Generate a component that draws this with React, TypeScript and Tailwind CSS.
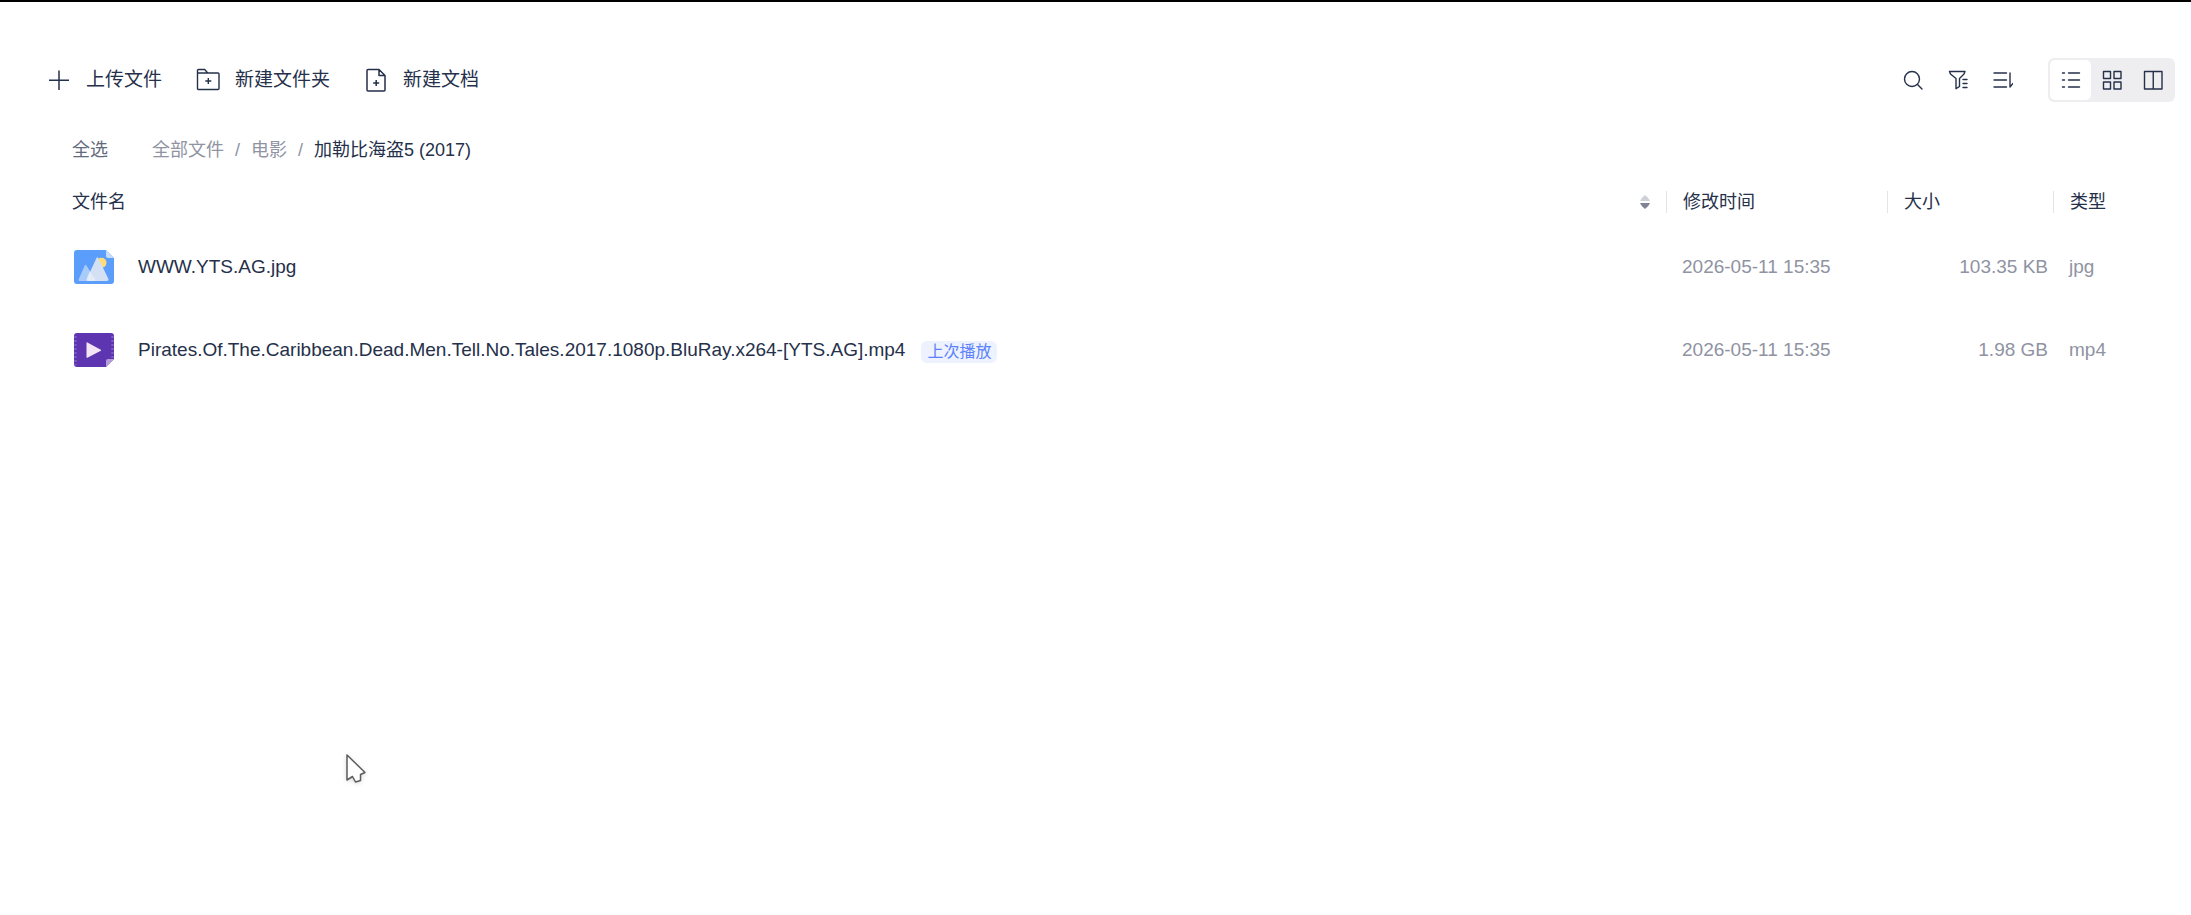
import type { ReactNode } from 'react'

const actions = [
  {
    label: '上传文件',
    icon: (
      <svg viewBox="0 0 24 24" className="h-6 w-6" fill="none" stroke="currentColor" strokeWidth="1.5" aria-hidden="true">
        <path d="M12 2.5v19.5M2 12.25h20" />
      </svg>
    ),
  },
  {
    label: '新建文件夹',
    icon: (
      <svg viewBox="0 0 24 24" className="h-6 w-6" fill="none" stroke="currentColor" strokeWidth="1.4" strokeLinejoin="round" aria-hidden="true">
        <path d="M1.5 5.2V2.500q0-1 1-1h6.200l3 3.500H22q1 0 1 1v14.500q0 1-1 1H2.500q-1 0-1-1zM1.500 5H11.700M12.300 10v6M9.300 13h6" />
      </svg>
    ),
  },
  {
    label: '新建文档',
    icon: (
      <svg viewBox="0 0 24 24" className="h-6 w-6" fill="none" stroke="currentColor" strokeWidth="1.5" strokeLinejoin="round" aria-hidden="true">
        <path d="M15 1.500H4q-1 0-1 1V22q0 1 1 1H20q1 0 1-1V7.500zV7.500h6M12.200 12v6M9.200 15h6" />
      </svg>
    ),
  },
]

const crumbs = ['全部文件', '电影']

const files = [
  { name: 'WWW.YTS.AG.jpg', time: '2026-05-11 15:35', size: '103.35 KB', type: 'jpg', lastPlayed: false },
  {
    name: 'Pirates.Of.The.Caribbean.Dead.Men.Tell.No.Tales.2017.1080p.BluRay.x264-[YTS.AG].mp4',
    time: '2026-05-11 15:35',
    size: '1.98 GB',
    type: 'mp4',
    lastPlayed: true,
  },
]

function LineIcon({ children }: { children: ReactNode }) {
  return (
    <svg viewBox="0 0 20 20" className="h-5 w-5" fill="none" stroke="currentColor" strokeWidth="1.4" strokeLinecap="round" strokeLinejoin="round" aria-hidden="true">
      {children}
    </svg>
  )
}

function ImageFileIcon() {
  return (
    <svg viewBox="0 0 40 34" className="h-[34px] w-10 flex-shrink-0" aria-hidden="true">
      <path d="M3 0H32L40 8V31a3 3 0 0 1-3 3H3a3 3 0 0 1-3-3V3a3 3 0 0 1 3-3z" fill="#5b9dfb" />
      <path d="M32 0L40 8H34a2 2 0 0 1-2-2z" fill="#c6dcfd" />
      <circle cx="27.500" cy="12.800" r="5" fill="#fddc79" />
      <path d="M10.800 15.500q.8-1.500 1.600 0L21 29q1 2-1 2H6q-2 0-1.200-2z" fill="#a9cbfa" />
      <path d="M22.500 8q.9-1.600 1.800 0L34.200 28.500q1 2.500-1.500 2.500H14.500q-2.500 0-1.500-2.500z" fill="#d4e1f5" />
      <path d="M15.800 21.500L21 29q1 2-1 2H14.500q-2.500 0-1.500-2.500z" fill="#e4ecf8" />
    </svg>
  )
}

function VideoFileIcon() {
  return (
    <svg viewBox="0 0 40 34" className="h-[34px] w-10 flex-shrink-0" aria-hidden="true">
      <path d="M3 0H37a3 3 0 0 1 3 3V26L32 34H3a3 3 0 0 1-3-3V3a3 3 0 0 1 3-3z" fill="#5e35b1" />
      <path d="M1.500 3V32M38.500 3V25" stroke="#7e5cc0" strokeWidth="2.400" strokeDasharray="2 2" />
      <path d="M32 34V28a2 2 0 0 1 2-2H40z" fill="#b39ddb" />
      <path d="M12.500 10v14.200q0 1 .9.500L26.800 17.700q.7-.5 0-1L13.400 9.400q-.9-.5-.9.600z" fill="#f3e5f5" />
    </svg>
  )
}

function HeadCell({ children }: { children: ReactNode }) {
  return <div className="flex h-[22px] items-center border-l border-[#e3e4e9] pl-4">{children}</div>
}

export default function App() {
  return (
    <main className="relative min-h-screen border-t-2 border-black bg-white font-['Liberation_Sans','Noto_Sans_CJK_SC',sans-serif] text-lg text-[#25304a]">

      {/* Toolbar */}
      <header className="flex items-center justify-between pt-14 pr-4 pl-[47px]">
        <div className="flex items-center gap-[34px]">
          {actions.map(({ label, icon }) => (
            <button key={label} type="button" className="flex items-center gap-[15px] text-[19px] leading-6">
              {icon}
              <span>{label}</span>
            </button>
          ))}
        </div>

        <div className="flex items-center">
          <div className="flex items-center gap-[25px] pr-[35px]">
            <button type="button" aria-label="搜索">
              <LineIcon>
                <circle cx="9" cy="9" r="7.500" />
                <path d="M14.500 14.500L19 19" />
              </LineIcon>
            </button>
            <button type="button" aria-label="筛选">
              <LineIcon>
                <path d="M1.500 1.500H17L16 4L11.500 8.500V16.500L8 18.700V8.500L2.500 4zM15 9.500h4M15 13.500h4M15 17.500h4" />
              </LineIcon>
            </button>
            <button type="button" aria-label="排序">
              <LineIcon>
                <path d="M1 3h12.500M1 10h12.500M1 17h12.500M17 3V17L20 13.500" />
              </LineIcon>
            </button>
          </div>

          <div className="flex rounded-md bg-[#eeeef1] p-[2px]">
            <button type="button" aria-label="列表" className="flex h-10 w-[41px] items-center justify-center rounded-[5px] bg-white">
              <LineIcon>
                <path d="M1.500 3h2M1.500 10h2M1.500 17h2M7.500 3H18.500M7.500 10H18.500M7.500 17H18.500" />
              </LineIcon>
            </button>
            <button type="button" aria-label="网格" className="flex h-10 w-[41px] items-center justify-center">
              <LineIcon>
                <path d="M1.500 1.500h7v7h-7zM12 1.500h7v7h-7zM1.500 12h7v7h-7zM12 12h7v7h-7z" />
              </LineIcon>
            </button>
            <button type="button" aria-label="分栏" className="flex h-10 w-[41px] items-center justify-center">
              <LineIcon>
                <path d="M1.500 1.500h17.500v17.500h-17.500zM10.250 1.500v17.500" />
              </LineIcon>
            </button>
          </div>
        </div>
      </header>

      {/* Breadcrumb */}
      <div className="flex items-center pt-9 pl-[72px] leading-6">
        <button type="button" className="text-[#636a7d]">全选</button>
        <nav className="flex items-center gap-[11px] pl-11 text-[#8f93a2]">
          {crumbs.map(name => (
            <span key={name} className="flex items-center gap-[11px]">
              <a href="#">{name}</a>
              <span>/</span>
            </span>
          ))}
          <span className="text-[#25304a]">加勒比海盗5 (2017)</span>
        </nav>
      </div>

      {/* File list */}
      <div className="pt-4 pr-[18px] pl-[72px]">
        <table className="w-full table-fixed text-left">
          <colgroup>
            <col />
            <col className="w-[221px]" />
            <col className="w-[166px]" />
            <col className="w-[120px]" />
          </colgroup>
          <thead>
            <tr className="h-[47px]">
              <th className="font-normal">
                <div className="flex items-center justify-between pr-4">
                  文件名
                  <button type="button" aria-label="按文件名排序">
                    <svg viewBox="0 0 10 14" className="h-3.5 w-2.5" aria-hidden="true">
                      <path d="M0 6Q1 3 5 0Q9 3 10 6z" fill="#cfd1d8" />
                      <path d="M0 8Q1 11 5 14Q9 11 10 8z" fill="#7f8494" />
                    </svg>
                  </button>
                </div>
              </th>
              <th className="font-normal"><HeadCell>修改时间</HeadCell></th>
              <th className="font-normal"><HeadCell>大小</HeadCell></th>
              <th className="font-normal"><HeadCell>类型</HeadCell></th>
            </tr>
          </thead>
          <tbody className="text-[19px] text-[#8f93a2]">
            {files.map(({ name, time, size, type, lastPlayed }) => (
              <tr key={name} className="h-[83px]">
                <td className="text-[#25304a]">
                  <div className="flex items-center pl-[2px]">
                    {type === 'jpg' ? <ImageFileIcon /> : <VideoFileIcon />}
                    <span className="pl-6">{name}</span>
                    {lastPlayed && (
                      <span className="mt-1 ml-4 rounded-md bg-[#eef2ff] px-1.5 text-base leading-[22px] text-[#5b82fb]">上次播放</span>
                    )}
                  </div>
                </td>
                <td className="pl-4">{time}</td>
                <td className="pr-[5px] text-right">{size}</td>
                <td className="pl-4">{type}</td>
              </tr>
            ))}
          </tbody>
        </table>
      </div>

      {/* Pointer */}
      <svg viewBox="0 0 24 32" className="absolute top-[751px] left-[344px] h-8 w-6 drop-shadow-sm" aria-hidden="true">
        <path d="M3 2V27L8.500 23.500L11.500 29L16.500 27.500V21.500L21 19.500z" fill="#fff" stroke="#5c5c5c" strokeWidth="1.500" strokeLinejoin="round" />
      </svg>
    </main>
  )
}
